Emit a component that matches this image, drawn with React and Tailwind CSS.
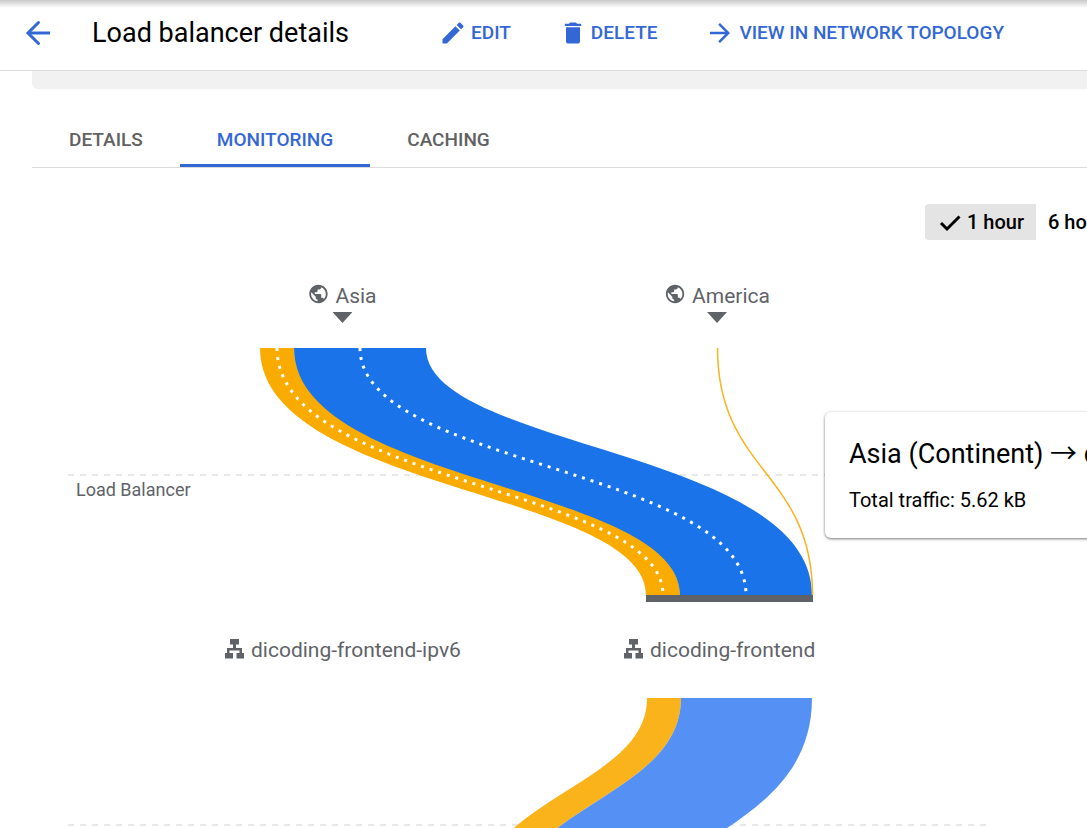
import { MdEdit, MdDelete, MdArrowForward, MdPublic } from "react-icons/md";

function ribbon(x0, x1, y0, y1, width, leftMid, rightMid) {
  return `M${x0} ${y0}C${x0} ${leftMid} ${x1} ${leftMid} ${x1} ${y1}h${width}C${x1 + width} ${rightMid} ${x0 + width} ${rightMid} ${x0 + width} ${y0}Z`;
}

function Action({ icon, children }) {
  return (
    <button type="button" className="flex shrink-0 items-center gap-1 text-[19px] leading-6 font-medium text-[#3367d6]">
      {icon}
      {children}
    </button>
  );
}

function Tab({ active, children }) {
  return (
    <button
      type="button"
      role="tab"
      aria-selected={Boolean(active)}
      className={
        active
          ? "h-[54px] border-b-3 border-[#3367d6] px-[37px] pt-1 text-[19px] font-medium text-[#3367d6]"
          : "h-[54px] border-b-3 border-transparent px-[37px] pt-1 text-[19px] font-medium text-[#616161]"
      }
    >
      {children}
    </button>
  );
}

function Region({ name, place }) {
  return (
    <div className={`absolute flex -translate-x-1/2 flex-col items-center ${place}`}>
      <div className="flex items-center gap-1.5 text-[21px] leading-6">
        <MdPublic className="mb-1 size-[22px]" />
        {name}
      </div>
      <svg width="20" height="11" className="mt-[3px]" aria-hidden="true">
        <path d="M0 0h20L10 11Z" fill="currentColor" />
      </svg>
    </div>
  );
}

function Frontend({ name, place }) {
  return (
    <div className={`absolute flex items-center gap-[7px] text-[21px] leading-6 ${place}`}>
      <svg width="19" height="20" viewBox="0 0 19 20" fill="currentColor" className="mb-0.5" aria-hidden="true">
        <path d="M5 0h9v5.500h-3v3.500h6v5h2.500v5.500h-8v-5.500h3v-2.500H4.500v2.500h3.500v5.500H0v-5.500h2V9h6V5.500H5Z" />
      </svg>
      {name}
    </div>
  );
}

export default function App() {
  return (
    <div className="h-screen overflow-hidden bg-white font-['Roboto',sans-serif] text-black">
      <header className="flex h-[71px] items-center border-b border-[#dcdcdc] bg-linear-to-b from-[#c9c9c9] to-white to-[8px] pb-1 pl-6 whitespace-nowrap">
        <button type="button" aria-label="Back" className="text-[#3367d6]">
          <svg width="28" height="28" viewBox="0 0 28 28" fill="none" stroke="currentColor" strokeWidth="3" strokeLinecap="round" className="block">
            <path d="M14.5 3.5L4 14l10.5 10.5" />
            <path d="M4 14h22" strokeLinecap="butt" />
          </svg>
        </button>
        <h1 className="ml-10 text-[27px] leading-8">Load balancer details</h1>
        <div className="ml-[90px] flex items-center gap-12">
          <Action icon={<MdEdit className="size-7" />}>EDIT</Action>
          <Action icon={<MdDelete className="size-7" />}>DELETE</Action>
          <Action icon={<MdArrowForward className="size-[30px]" />}>VIEW IN NETWORK TOPOLOGY</Action>
        </div>
      </header>

      <main className="pl-8">
        <div className="h-[18px] rounded-bl-md bg-[#f1f1f1]" />
        <div role="tablist" className="mt-6 flex border-b border-[#dcdcdc]">
          <Tab>DETAILS</Tab>
          <Tab active>MONITORING</Tab>
          <Tab>CACHING</Tab>
        </div>

        <div className="mt-9 flex justify-end overflow-hidden text-xl font-medium whitespace-nowrap">
          <div className="flex w-[162px] shrink-0">
            <button type="button" className="flex h-9 shrink-0 items-center gap-[3px] rounded-l bg-[#e4e4e4] px-3">
              <svg width="27" height="27" viewBox="0 0 27 27" fill="none" stroke="currentColor" strokeWidth="3" aria-hidden="true">
                <path d="M4 14l6 6L22.500 7.500" />
              </svg>
              1 hour
            </button>
            <button type="button" className="h-9 shrink-0 px-3">6 hours</button>
          </div>
        </div>

        <section className="relative mt-2 h-[580px] text-[#5f6368]" aria-label="Traffic flow">
          <svg viewBox="0 248 1055 580" width="1055" height="580" className="block" aria-hidden="true">
            <g transform="translate(-32 0)">
              <path d="M68 475H987M68 825H987" stroke="#e8e8e8" strokeWidth="2" strokeDasharray="6 6" />
              <path d={ribbon(260, 646, 348, 595, 34, 491, 482)} fill="#f9ab00" />
              <path d={ribbon(294, 680, 348, 595, 132, 485, 449)} fill="#1a73e8" />
              <path d="M277 348C277 486 663 486 663 595M360 348C360 467 746 467 746 595" fill="none" stroke="#fff" strokeWidth="3" strokeDasharray="3 6" />
              <path d="M717.5 348C717.5 472 812.5 472 812.5 595" fill="none" stroke="#fab31e" strokeWidth="1.5" />
              <path d="M646 595h167v7H646Z" fill="#5f6368" />
              <path d={ribbon(647, 457, 698, 945, 34, 793, 804)} fill="#fab31b" />
              <path d={ribbon(681, 491, 698, 945, 131, 804, 839)} fill="#5590f5" />
            </g>
          </svg>
          <Region name="Asia" place="left-[310px] top-[35px]" />
          <Region name="America" place="left-[685px] top-[35px]" />
          <span className="absolute top-[230px] left-11 text-lg leading-6">Load Balancer</span>
          <Frontend name="dicoding-frontend-ipv6" place="left-[193px] top-[390px]" />
          <Frontend name="dicoding-frontend" place="left-[592px] top-[390px]" />
          <div className="absolute top-[164px] left-[793px] w-[420px] rounded-md bg-white px-6 pt-6 pb-6 whitespace-nowrap text-black shadow-[0_1px_3px_rgba(0,0,0,0.55)]">
            <div className="text-[27px] leading-9">
              Asia (Continent) <span className="font-['Noto_Sans_CJK_JP',sans-serif] leading-none">→</span> dicoding-frontend
            </div>
            <div className="mt-[14px] text-xl leading-7">Total traffic: 5.62 kB</div>
          </div>
        </section>
      </main>
    </div>
  );
}
